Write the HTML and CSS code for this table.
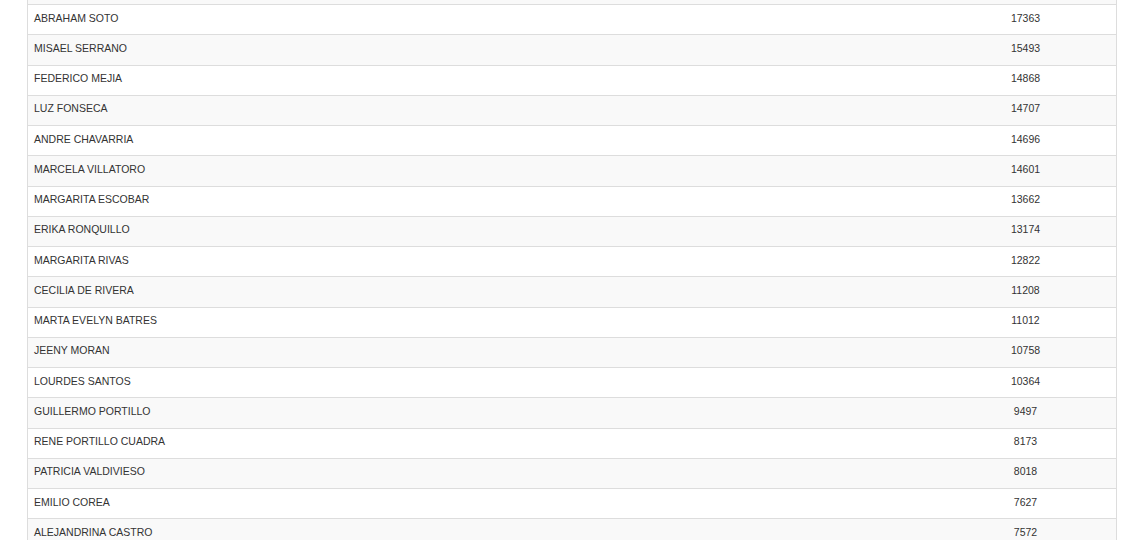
FILE: index.html
```html
<!DOCTYPE html>
<html lang="es">
<head>
<meta charset="utf-8">
<title>Ranking</title>
<link rel="stylesheet" href="styles.css">
</head>
<body>
<div class="wrap">
<table class="ranking">
<tbody>
<tr class="cut"><td></td><td></td></tr>
<tr><td>ABRAHAM SOTO</td><td class="num">17363</td></tr>
<tr><td>MISAEL SERRANO</td><td class="num">15493</td></tr>
<tr><td>FEDERICO MEJIA</td><td class="num">14868</td></tr>
<tr><td>LUZ FONSECA</td><td class="num">14707</td></tr>
<tr><td>ANDRE CHAVARRIA</td><td class="num">14696</td></tr>
<tr><td>MARCELA VILLATORO</td><td class="num">14601</td></tr>
<tr><td>MARGARITA ESCOBAR</td><td class="num">13662</td></tr>
<tr><td>ERIKA RONQUILLO</td><td class="num">13174</td></tr>
<tr><td>MARGARITA RIVAS</td><td class="num">12822</td></tr>
<tr><td>CECILIA DE RIVERA</td><td class="num">11208</td></tr>
<tr><td>MARTA EVELYN BATRES</td><td class="num">11012</td></tr>
<tr><td>JEENY MORAN</td><td class="num">10758</td></tr>
<tr><td>LOURDES SANTOS</td><td class="num">10364</td></tr>
<tr><td>GUILLERMO PORTILLO</td><td class="num">9497</td></tr>
<tr><td>RENE PORTILLO CUADRA</td><td class="num">8173</td></tr>
<tr><td>PATRICIA VALDIVIESO</td><td class="num">8018</td></tr>
<tr><td>EMILIO COREA</td><td class="num">7627</td></tr>
<tr><td>ALEJANDRINA CASTRO</td><td class="num">7572</td></tr>
</tbody>
</table>
</div>
</body>
</html>
```
FILE: styles.css
```css
html, body {
  margin: 0;
  padding: 0;
  background: #ffffff;
}
body {
  font-family: "Liberation Sans", Arial, Helvetica, sans-serif;
  color: #333333;
}
.wrap {
  padding: 0 23px 0 27px;
}
.ranking {
  width: 100%;
  border-collapse: separate;
  border-spacing: 0;
  border-left: 1px solid #dddddd;
  border-right: 1px solid #dddddd;
  font-size: 10.5px;
}
.ranking td {
  border-top: 1px solid #dddddd;
  padding: 5.5px 6px 8.5px 6px;
  line-height: 15.25px;
  text-align: left;
  vertical-align: top;
  white-space: nowrap;
}
.ranking tr:nth-child(odd) td {
  background: #f9f9f9;
}
.ranking td.num {
  width: 169px;
  text-align: center;
}
.ranking tr.cut td {
  height: 4px;
  padding: 0;
  line-height: 0;
  border-top: none;
}
```
